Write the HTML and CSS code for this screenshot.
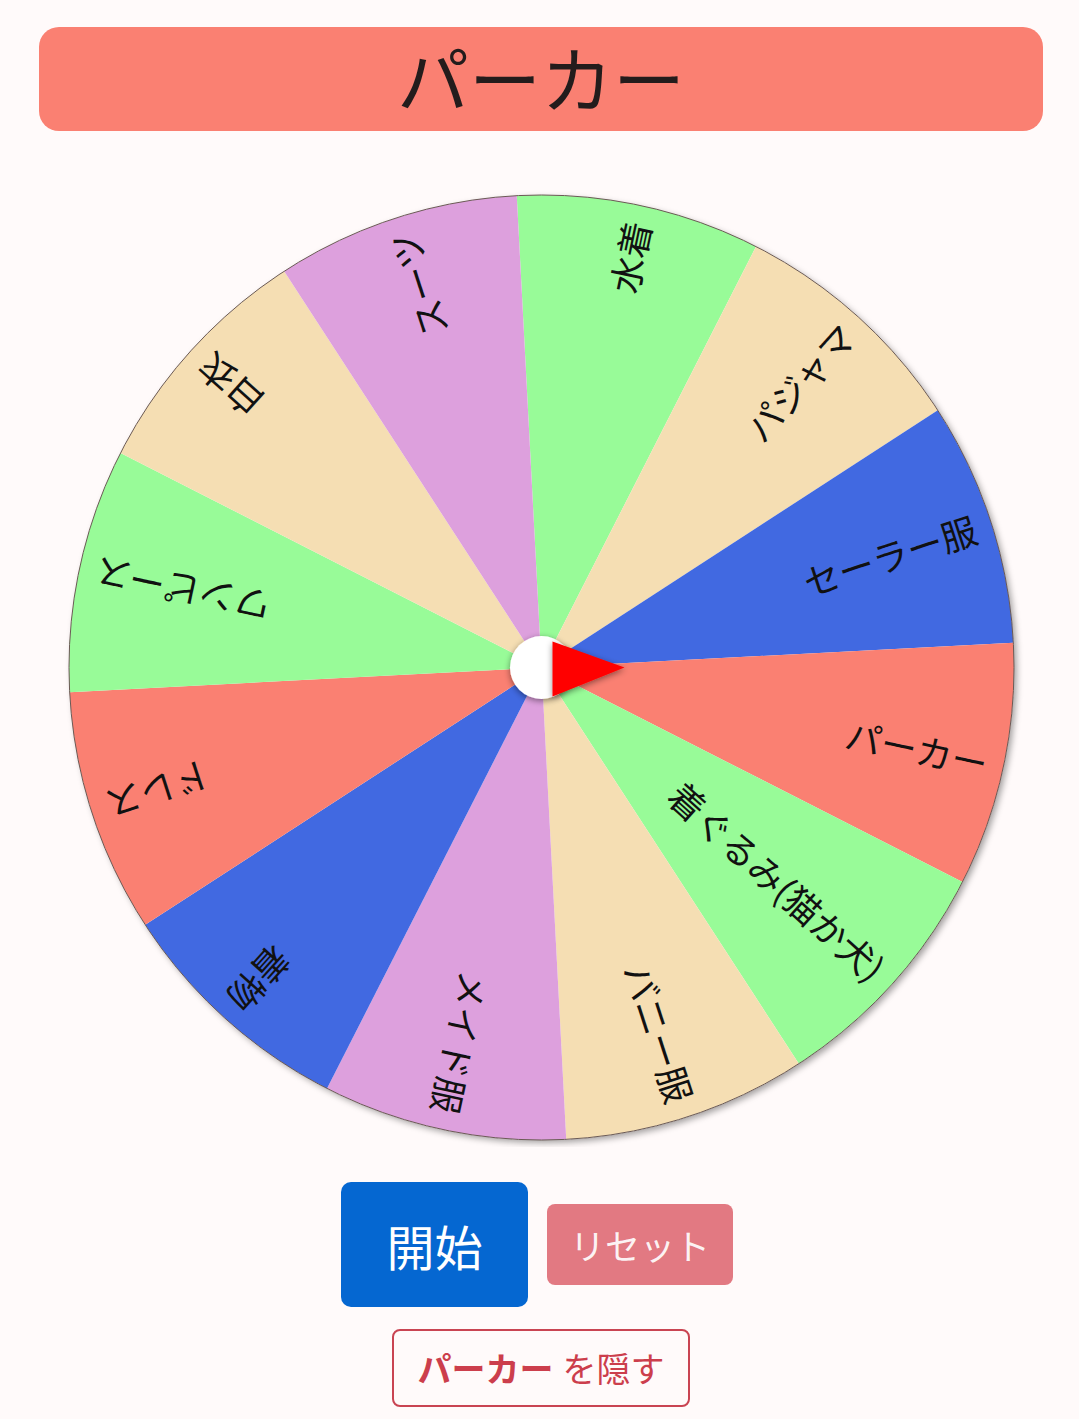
FILE: index.html
```html
<!DOCTYPE html>
<html lang="ja">
<head>
<meta charset="utf-8">
<title>ルーレット</title>
<link rel="stylesheet" href="styles.css">
</head>
<body>
<div class="banner">パーカー</div>

<svg class="wheel" width="1079" height="960" viewBox="0 0 1079 960" xmlns="http://www.w3.org/2000/svg">
  <defs>
    <filter id="wshadow" x="-10%" y="-10%" width="120%" height="120%">
      <feDropShadow dx="3" dy="3" stdDeviation="3" flood-color="#000" flood-opacity="0.35"/>
    </filter>
    <filter id="pshadow" x="-50%" y="-50%" width="200%" height="200%">
      <feDropShadow dx="0" dy="2" stdDeviation="3" flood-color="#000" flood-opacity="0.45"/>
    </filter>
  </defs>
  <g transform="translate(541.5 480.5)">
    <g filter="url(#wshadow)">
      <circle r="472.5" fill="#fff"/>
    </g>
    <g class="wedges">
      <path transform="rotate(-78)" fill="#98fb98" d="M0 0L456.4 -122.29A472.5 472.5 0 0 1 456.4 122.29Z"/>
      <path transform="rotate(-48)" fill="#f5deb3" d="M0 0L456.4 -122.29A472.5 472.5 0 0 1 456.4 122.29Z"/>
      <path transform="rotate(-18)" fill="#4169e1" d="M0 0L456.4 -122.29A472.5 472.5 0 0 1 456.4 122.29Z"/>
      <path transform="rotate(12)" fill="#fa8072" d="M0 0L456.4 -122.29A472.5 472.5 0 0 1 456.4 122.29Z"/>
      <path transform="rotate(42)" fill="#98fb98" d="M0 0L456.4 -122.29A472.5 472.5 0 0 1 456.4 122.29Z"/>
      <path transform="rotate(72)" fill="#f5deb3" d="M0 0L456.4 -122.29A472.5 472.5 0 0 1 456.4 122.29Z"/>
      <path transform="rotate(102)" fill="#dda0dd" d="M0 0L456.4 -122.29A472.5 472.5 0 0 1 456.4 122.29Z"/>
      <path transform="rotate(132)" fill="#4169e1" d="M0 0L456.4 -122.29A472.5 472.5 0 0 1 456.4 122.29Z"/>
      <path transform="rotate(162)" fill="#fa8072" d="M0 0L456.4 -122.29A472.5 472.5 0 0 1 456.4 122.29Z"/>
      <path transform="rotate(192)" fill="#98fb98" d="M0 0L456.4 -122.29A472.5 472.5 0 0 1 456.4 122.29Z"/>
      <path transform="rotate(222)" fill="#f5deb3" d="M0 0L456.4 -122.29A472.5 472.5 0 0 1 456.4 122.29Z"/>
      <path transform="rotate(252)" fill="#dda0dd" d="M0 0L456.4 -122.29A472.5 472.5 0 0 1 456.4 122.29Z"/>
    </g>
    <circle r="472.5" fill="none" stroke="#6b5a55" stroke-width="1"/>
    <g class="labels">
      <text transform="rotate(-78)" x="456" y="0">水着</text>
      <text transform="rotate(-48)" x="456" y="0">パジャマ</text>
      <text transform="rotate(-18)" x="456" y="0">セーラー服</text>
      <text transform="rotate(12)" x="456" y="0">パーカー</text>
      <text transform="rotate(42)" x="456" y="0">着ぐるみ(猫か犬)</text>
      <text transform="rotate(72)" x="456" y="0">バニー服</text>
      <text transform="rotate(102)" x="456" y="0">メイド服</text>
      <text transform="rotate(132)" x="456" y="0">着物</text>
      <text transform="rotate(162)" x="456" y="0">ドレス</text>
      <text transform="rotate(192)" x="456" y="0">ワンピース</text>
      <text transform="rotate(222)" x="456" y="0">白衣</text>
      <text transform="rotate(252)" x="456" y="0">スーツ</text>
    </g>
    <circle r="31.5" fill="#fff" filter="url(#pshadow)"/>
    <polygon points="11,-26 83,0 11,29" fill="#ff0000" filter="url(#pshadow)"/>
  </g>
</svg>

<div class="controls">
  <button class="btn btn-start" type="button">開始</button>
  <button class="btn btn-reset" type="button">リセット</button>
</div>
<div class="hide-row">
  <button class="btn btn-hide" type="button"><b>パーカー</b> を隠す</button>
</div>
</body>
</html>
```

FILE: styles.css
```css
html, body {
  margin: 0;
  padding: 0;
}

body {
  background: #fffafa;
  font-family: "Noto Sans CJK JP", "Noto Sans", sans-serif;
  color: #222;
  width: 1079px;
}

.banner {
  margin: 27px 36px 0 39px;
  height: 104px;
  box-sizing: border-box;
  padding-bottom: 6px;
  background: #fa8072;
  border-radius: 20px;
  display: flex;
  align-items: center;
  justify-content: center;
  font-size: 72px;
  line-height: 1;
  color: #231c1c;
}

.wheel {
  display: block;
  margin-top: 56px;
}

.labels text {
  font-family: "Noto Sans CJK JP", sans-serif;
  font-size: 36px;
  fill: #111;
  text-anchor: end;
  dominant-baseline: central;
}

.controls {
  display: flex;
  justify-content: center;
  align-items: center;
  gap: 19px;
  margin-top: 35px;
  padding-right: 5px;
}

.btn {
  font-family: "Noto Sans CJK JP", sans-serif;
  padding: 0;
  border: none;
  display: flex;
  align-items: center;
  justify-content: center;
  line-height: 1;
}

.btn-start {
  width: 187px;
  height: 125px;
  background: #0567d1;
  color: #fff;
  border-radius: 10px;
  font-size: 48px;
}

.btn-reset {
  width: 186px;
  height: 81px;
  background: #e27982;
  color: rgba(255, 255, 255, 0.92);
  border-radius: 8px;
  font-size: 35px;
}

.hide-row {
  display: flex;
  justify-content: center;
  margin-top: 22px;
  padding-left: 3px;
}

.btn-hide {
  width: 298px;
  height: 78px;
  background: transparent;
  border: 2px solid #c94452;
  border-radius: 8px;
  color: #cc3e4c;
  font-size: 34px;
}

.btn-hide b {
  font-weight: 700;
  margin-right: 9px;
}
```
